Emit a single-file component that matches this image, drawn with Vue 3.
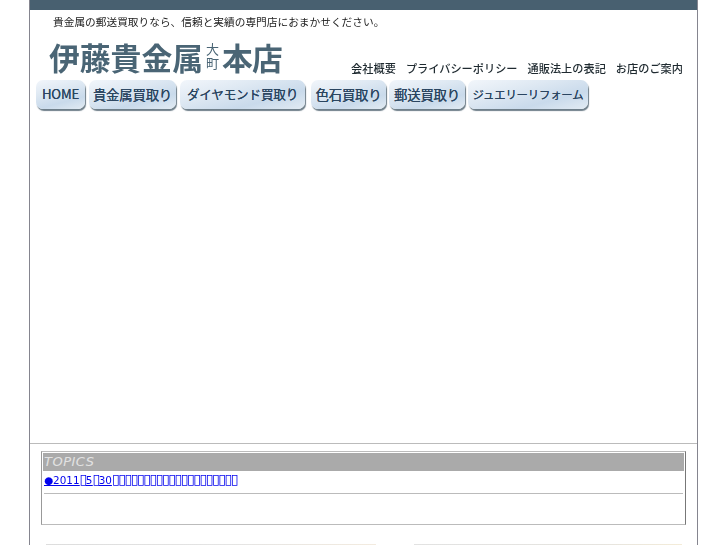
<script setup>
const navItems = [
  { label: 'HOME', width: 49, gap: 4, size: 13.2 },
  { label: '貴金属買取り', width: 87, gap: 4, size: 13.4 },
  { label: 'ダイヤモンド買取り', width: 125, gap: 6, size: 12.6 },
  { label: '色石買取り', width: 75, gap: 3, size: 13.4 },
  { label: '郵送買取り', width: 76, gap: 3, size: 13.4 },
  { label: 'ジュエリーリフォーム', width: 120, gap: 0, size: 11.4 }
]
const subLinks = ['会社概要', 'プライバシーポリシー', '通販法上の表記', 'お店のご案内']
const box = '\u25AF'
const topicChain = box.repeat(20)
</script>

<template>
  <div class="page">
    <div class="top-bar"></div>
    <header class="header">
      <p class="tagline">貴金属の郵送買取りなら、信頼と実績の専門店におまかせください。</p>
      <div class="brand-row">
        <div class="logo">
          <span>伊藤貴金属</span>
          <span class="logo-small">大町</span>
          <span class="logo-end">本店</span>
        </div>
        <nav class="sub-links">
          <a v-for="link in subLinks" :key="link">{{ link }}</a>
        </nav>
      </div>
      <nav class="main-nav">
        <a
          v-for="item in navItems"
          :key="item.label"
          class="nav-btn"
          :style="{ width: item.width + 'px', marginRight: item.gap + 'px', fontSize: item.size + 'px' }"
        >{{ item.label }}</a>
      </nav>
    </header>
    <section class="topics-wrap">
      <div class="topics">
        <h2 class="topics-title">TOPICS</h2>
        <div class="topics-body">
          <a class="topic-link" href="#">●2011<span class="box">{{ box }}</span>5<span class="box">{{ box }}</span>30<span class="box">{{ topicChain }}</span></a>
        </div>
        <div class="topics-rule"></div>
      </div>
      <div class="bottom-strips">
        <div class="strip strip-a"></div>
        <div class="strip strip-b"></div>
      </div>
    </section>
  </div>
</template>

<style>
html, body {
  margin: 0;
  background: #fff;
  overflow: hidden;
}
</style>

<style scoped>
.page {
  box-sizing: border-box;
  width: 669px;
  height: 545px;
  margin-left: 29px;
  border-left: 1px solid #85858f;
  border-right: 1px solid #85858f;
  font-family: "Noto Sans CJK JP", "Noto Sans", sans-serif;
  overflow: hidden;
}
.top-bar {
  height: 10px;
  background: #486070;
}
.header {
  box-sizing: border-box;
  height: 434px;
  padding: 5px 6px 0;
  border-bottom: 1px solid #bbb;
}
.tagline {
  margin: 0 0 0 17px;
  font-family: "Liberation Serif", "Noto Sans CJK JP", serif;
  font-size: 10.7px;
  line-height: 14px;
  color: #222;
  white-space: nowrap;
  filter: blur(0.3px);
}
.brand-row {
  display: flex;
  justify-content: space-between;
  align-items: flex-end;
  height: 47px;
  padding: 0 8px 0 13px;
}
.logo {
  display: flex;
  align-items: center;
  height: 38px;
  color: #4a6575;
  font-size: 30.8px;
  font-weight: 700;
  line-height: 38px;
  white-space: nowrap;
  filter: blur(0.3px);
}
.logo-small {
  writing-mode: vertical-rl;
  width: 14px;
  margin: 0 3px 0 2px;
  font-size: 13px;
  line-height: 14px;
  letter-spacing: 1px;
  font-weight: 400;
}
.logo-end {
  letter-spacing: -0.8px;
}
.sub-links {
  display: flex;
  gap: 10px;
  font-size: 11.2px;
  font-weight: 500;
  line-height: 16px;
  color: #1f2a30;
  white-space: nowrap;
  filter: blur(0.25px);
}
.main-nav {
  display: flex;
  margin-top: 4px;
}
.nav-btn {
  box-sizing: border-box;
  height: 29px;
  display: flex;
  align-items: center;
  justify-content: center;
  padding-bottom: 2px;
  border-radius: 7px;
  background: linear-gradient(165deg, #f2f6fb 0%, #dfe9f3 35%, #c9daeb 70%, #e2ebf3 100%);
  box-shadow: 1px 2px 1px #6f7f8a;
  color: #2a4560;
  font-weight: 400;
  text-shadow: 0 0 0.6px #2a4560;
  white-space: nowrap;
  letter-spacing: -0.2px;
}
.topics-wrap {
  padding: 7px 11px 0;
}
.topics {
  box-sizing: border-box;
  width: 645px;
  height: 74px;
  padding: 1px;
  border: 1px solid;
  border-color: #bbb #777 #bbb #999;
}
.topics-title {
  margin: 0;
  height: 18px;
  padding-left: 1px;
  background: #aaa;
  color: #e2e2e2;
  font-family: "DejaVu Sans", sans-serif;
  font-size: 13px;
  font-style: italic;
  font-weight: 400;
  line-height: 18px;
  letter-spacing: 0.5px;
}
.topics-body {
  box-sizing: border-box;
  height: 22px;
  padding: 1px 0 0 1px;
  font-family: "DejaVu Sans", sans-serif;
  font-size: 10.4px;
  line-height: 15px;
}
.topic-link {
  color: #0000ee;
  white-space: nowrap;
  opacity: 0.99;
}
.box {
  font-size: 14px;
  letter-spacing: -1.45px;
}
.topics-rule {
  height: 1px;
  margin: 0 1px;
  background: #bbb;
}
.bottom-strips {
  display: flex;
  margin-top: 19px;
  padding-left: 5px;
}
.strip {
  height: 2px;
}
.strip-a {
  width: 330px;
  margin-right: 38px;
  background: linear-gradient(90deg, #ddd, #e4e4e4 55%, #f3ebdf);
}
.strip-b {
  width: 268px;
  background: linear-gradient(90deg, #e2e2e2, #e6e4df 70%, #f4ecd8);
}
</style>
